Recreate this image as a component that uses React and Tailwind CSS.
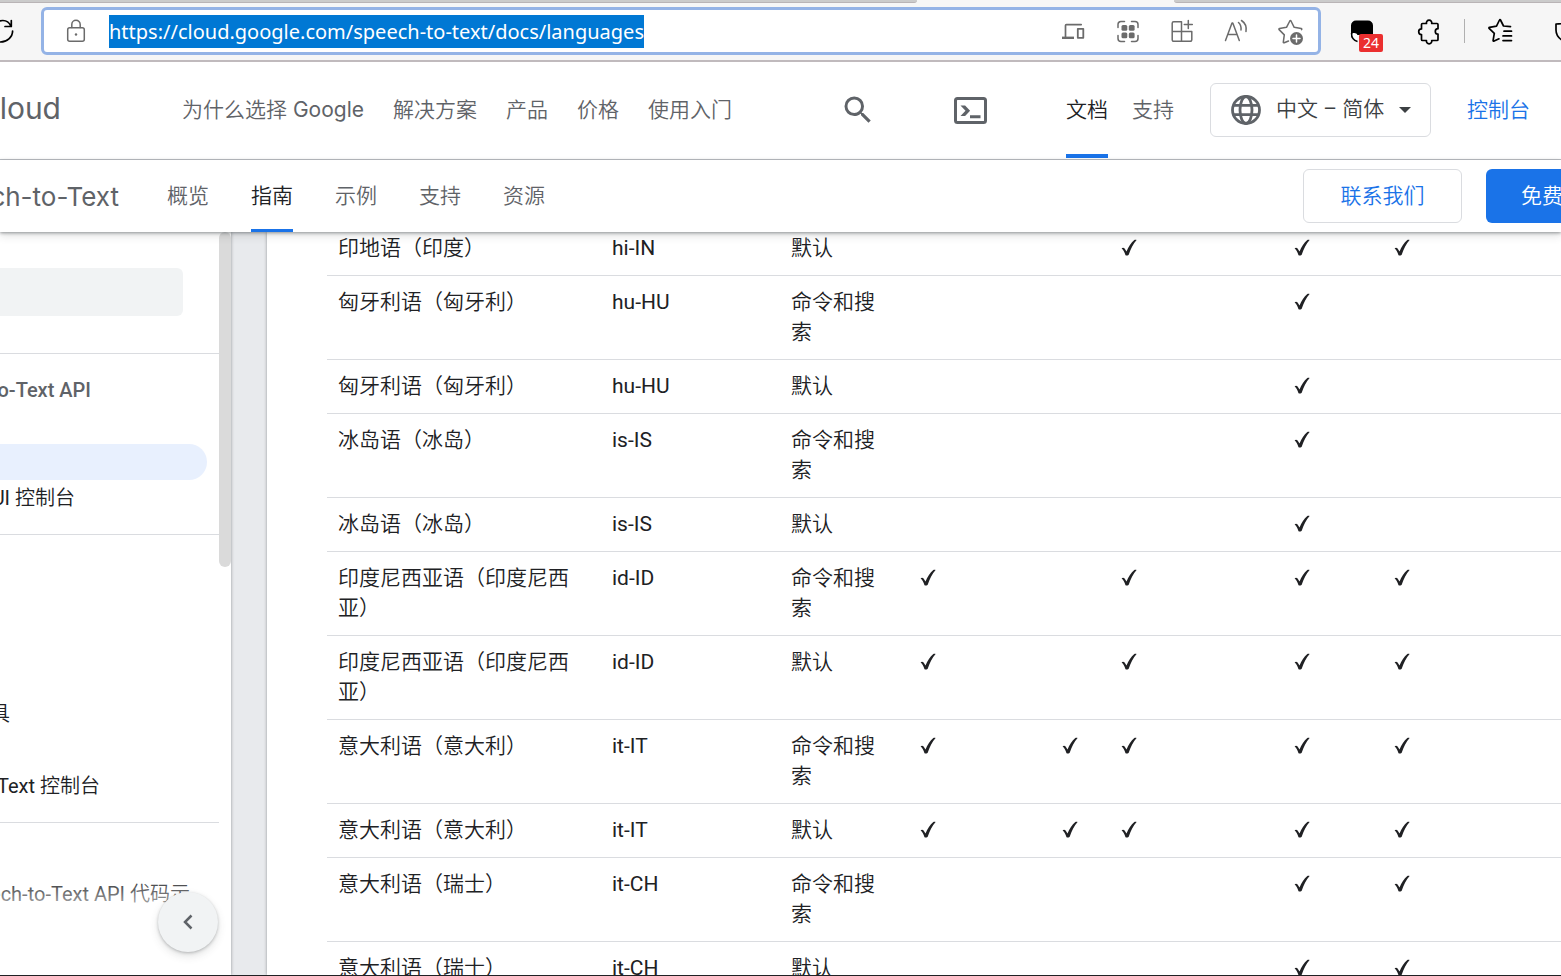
import React, { useState } from "react";

const pageUrl = "https://cloud.google.com/speech-to-text/docs/languages";

const productLinks = ["为什么选择 Google", "解决方案", "产品", "价格", "使用入门"];
const guideTabs = ["概览", "指南", "示例", "支持", "资源"];

// checks: one flag per feature column
const languages = [
  { name: "印地语（印度）", code: "hi-IN", model: "默认", checks: [0, 0, 1, 1, 1] },
  { name: "匈牙利语（匈牙利）", code: "hu-HU", model: "命令和搜索", checks: [0, 0, 0, 1, 0] },
  { name: "匈牙利语（匈牙利）", code: "hu-HU", model: "默认", checks: [0, 0, 0, 1, 0] },
  { name: "冰岛语（冰岛）", code: "is-IS", model: "命令和搜索", checks: [0, 0, 0, 1, 0] },
  { name: "冰岛语（冰岛）", code: "is-IS", model: "默认", checks: [0, 0, 0, 1, 0] },
  { name: "印度尼西亚语（印度尼西亚）", code: "id-ID", model: "命令和搜索", checks: [1, 0, 1, 1, 1] },
  { name: "印度尼西亚语（印度尼西亚）", code: "id-ID", model: "默认", checks: [1, 0, 1, 1, 1] },
  { name: "意大利语（意大利）", code: "it-IT", model: "命令和搜索", checks: [1, 1, 1, 1, 1] },
  { name: "意大利语（意大利）", code: "it-IT", model: "默认", checks: [1, 1, 1, 1, 1] },
  { name: "意大利语（瑞士）", code: "it-CH", model: "命令和搜索", checks: [0, 0, 0, 1, 1] },
  { name: "意大利语（瑞士）", code: "it-CH", model: "默认", checks: [0, 0, 0, 1, 1] },
];

function LineIcon({ children, className = "" }) {
  return (
    <svg
      viewBox="0 0 28 28"
      className={`h-7 w-7 shrink-0 ${className}`}
      fill="none"
      stroke="currentColor"
      strokeWidth="1.5"
      strokeLinecap="round"
      strokeLinejoin="round"
      aria-hidden="true"
    >
      {children}
    </svg>
  );
}

function CheckIcon() {
  return (
    <svg viewBox="0 0 22 30" className="block h-[30px] w-[22px] fill-[#202124]" role="img" aria-label="支持">
      <path d="M3.600 15.300c.9-.9 2.300-.8 3 .2l1.900 3.100C10.600 13.600 13 9.600 16.300 7c.6-.4 1.700-.4 2.300-.1-3.300 3.600-5.900 9-7.900 14.900-.2.8-2.900 1-3.300.2-.9-2.500-1.900-5-3.800-6.700z" />
    </svg>
  );
}

function BrowserBar() {
  const [url, setUrl] = useState(pageUrl);

  return (
    <div className="shrink-0 border-b-2 border-[#c0babd] bg-[#f6f6f6]">
      <div className="flex h-[3px]">
        <div className="flex-[917] rounded-br border-b border-[#b9b4b6] bg-[#cbcbcb]" />
        <div className="flex-[257]" />
        <div className="flex-[387] rounded-bl border-b border-[#b9b4b6] bg-[#cbcbcb]" />
      </div>
      <div className="flex h-[57px] items-center pb-px">
        <button type="button" aria-label="刷新" className="w-[41px] text-black">
          <svg viewBox="0 0 14 28" className="h-7 w-[14px]" fill="none" stroke="currentColor" strokeWidth="1.7" strokeLinecap="round" strokeLinejoin="round">
            <path d="M0 3.800C4.800 2.800 9 4.800 10.800 9M11.300 3.500v6H5M12.600 14c0 6-5.600 11.200-12.600 11" />
          </svg>
        </button>
        <div className="flex h-12 flex-1 items-center rounded-md border-3 border-[#94b3e6] bg-white pr-[14px] pl-[18px] text-[#6b6b6b]">
          <LineIcon>
            <rect x="5.700" y="10.700" width="16.600" height="13.600" rx="2" />
            <path d="M9.800 10.500V7.500a4.200 4.200 0 0 1 8.400 0v3" />
            <circle cx="14" cy="17.500" r="1.200" fill="currentColor" stroke="none" />
          </LineIcon>
          <input
            aria-label="地址栏"
            value={url}
            onChange={(e) => setUrl(e.target.value)}
            className="ml-[19px] h-[33px] field-sizing-content bg-[#0078d4] font-['Noto_Sans',sans-serif] text-[20px] text-white outline-none"
          />
          <div className="ml-auto flex gap-[26px]">
            <LineIcon>
              <path d="M5.500 20.500V8.500c0-.6.3-.9.9-.9h14.800" strokeWidth="1.700" />
              <path d="M2 20.800h12" strokeWidth="2.400" strokeLinecap="butt" />
              <rect x="17.800" y="11.800" width="5.500" height="9" strokeWidth="1.800" />
            </LineIcon>
            <LineIcon>
              <path d="M10.500 4.500H7A3 3 0 0 0 4 7.500v3M17.500 4.500H21a3 3 0 0 1 3 3v3M10.500 24.500H7a3 3 0 0 1-3-3v-3M17.500 24.500H21a3 3 0 0 0 3-3v-3" />
              <g fill="currentColor" stroke="none">
                <rect x="7.500" y="8" width="5.800" height="5.800" rx="1.500" />
                <rect x="14.800" y="8" width="5.800" height="5.800" rx="1.500" />
                <rect x="7.500" y="15.500" width="5.800" height="5.800" rx="1.500" />
                <rect x="14.800" y="15.500" width="5.800" height="5.800" rx="1.500" />
              </g>
            </LineIcon>
            <LineIcon>
              <path d="M13.500 4.700H5.700a1.500 1.500 0 0 0-1.500 1.500v16.600a1.500 1.500 0 0 0 1.500 1.500h16.600a1.500 1.500 0 0 0 1.500-1.500v-8.300H4.200M13.500 4.700v19.600M20.300 3.500v8M16.300 7.500h8" />
            </LineIcon>
            <LineIcon>
              <path d="M3.500 23.500 10 6h.8l6.500 17.500M6 17.500h8.800M16.500 5.500c2 1.800 2.800 4.500 2.500 7.500M19.500 3.500c3.800 2.500 5.200 6.500 4.500 11" />
            </LineIcon>
            <LineIcon>
              <path d="m12.500 24-4.300 1.800c-.6.200-1-.1-.9-.7l1-7.200-5.200-5.300c-.4-.5-.2-1 .4-1.100l7-1.200 3.300-6.300c.3-.5.9-.5 1.200 0l3.200 6.300 7 1.200c.6.100.8.600.4 1.100" />
              <circle cx="20.500" cy="21.500" r="6.500" fill="currentColor" stroke="none" />
              <path d="M20.500 18v7M17 21.500h7" stroke="white" />
            </LineIcon>
          </div>
        </div>
        <div className="relative ml-[27px]">
          <svg viewBox="0 0 28 28" className="h-7 w-7" aria-hidden="true">
            <path d="M8 3.500h12a5 5 0 0 1 5 5V18H4v3.500A5 5 0 0 1 3 18V8.500a5 5 0 0 1 5-5z" fill="black" />
            <path d="M4 17.500c0-2 5-2 5.500 1V24C6 23.500 4 21.500 4 17.500z" fill="white" />
            <path d="M3.500 16c0 4.500 1.500 7.500 6 8.500" fill="none" stroke="black" strokeWidth="1.500" />
          </svg>
          <span className="absolute top-[17px] left-[11px] grid h-[18px] w-6 place-items-center rounded-xs bg-[#eb2f2f] font-['Noto_Sans',sans-serif] text-sm leading-none text-white">
            24
          </span>
        </div>
        <button type="button" aria-label="扩展" className="ml-[39px] text-black">
          <LineIcon>
            <path d="M7.500 6.500h4a2.700 2.700 0 1 1 5.200 0h5.300a1 1 0 0 1 1 1v4.200a2.700 2.700 0 1 0 0 5.400v5.400a1 1 0 0 1-1 1h-5.300a2.700 2.700 0 1 1-5.200 0h-4a1 1 0 0 1-1-1v-5a2.700 2.700 0 1 1 0-5.600V7.500a1 1 0 0 1 1-1z" strokeWidth="1.700" />
          </LineIcon>
        </button>
        <div className="mx-[21px] h-6 w-px bg-[#b0b0b0]" />
        <button type="button" aria-label="收藏夹" className="text-black">
          <LineIcon>
            <path d="M24.500 10.700 17.500 10l-3-6c-.2-.5-.8-.5-1 0l-3 6.200-7 1.100c-.6.100-.8.700-.4 1.100l5.200 5-1.200 7c-.1.600.5 1 1 .7L13 22.800M18 15.200h7.500M17 19.900h8.500M17 24.600h8.500" transform="translate(0 -1)" strokeWidth="1.700" />
          </LineIcon>
        </button>
        <div className="ml-10 w-[7px] overflow-hidden text-black">
          <LineIcon>
            <path d="M13 4C10 6.500 6 7 2 7v6c0 6 4 9.500 9 12" strokeWidth="1.700" />
          </LineIcon>
        </div>
      </div>
    </div>
  );
}

function SiteHeader() {
  return (
    <header className="flex h-[98px] shrink-0 items-center border-b border-[#bdc1c6] bg-white pr-[31px] pb-px font-[Inter,'Noto_Sans_CJK_SC_DemiLight','Noto_Sans_CJK_SC_Light','Noto_Sans_CJK_SC',sans-serif] text-[21px] whitespace-nowrap text-[#5f6368]">
      <a href="#home" className="flex w-[61px] justify-end pb-1 text-[30px]">
        loud
      </a>
      <nav className="ml-[121px] flex gap-[29px]">
        {productLinks.map((label) => (
          <a key={label} href="#product">
            {label}
          </a>
        ))}
      </nav>
      <div className="ml-auto flex h-full items-center">
        <button type="button" aria-label="搜索">
          <svg viewBox="0 0 24 24" className="size-9 fill-current">
            <path d="M15.500 14h-.79l-.28-.27A6.470 6.470 0 0 0 16 9.500 6.500 6.500 0 1 0 9.500 16c1.610 0 3.090-.59 4.230-1.570l.27.280v.79l5 4.990L20.490 19l-4.990-5zm-6 0C7.010 14 5 11.990 5 9.500S7.010 5 9.500 5 14 7.010 14 9.500 11.990 14 9.500 14z" />
          </svg>
        </button>
        <button type="button" aria-label="Cloud Shell" className="ml-[77px]">
          <svg viewBox="0 0 36 36" className="size-9">
            <rect x="2.500" y="6.500" width="30" height="24" rx="2" fill="none" stroke="currentColor" strokeWidth="3" />
            <path d="M7.500 13.500h4.600l5 5.300-5 5.300H7.500l5-5.300zM17 23.300h10.500v3H17z" fill="currentColor" />
          </svg>
        </button>
        <nav className="ml-[77px] flex h-full gap-6">
          <a href="#docs" className="flex items-center border-y-4 border-t-transparent border-b-[#1a73e8] text-[#202124]">
            文档
          </a>
          <a href="#support" className="flex items-center">
            支持
          </a>
        </nav>
        <div className="ml-9 flex h-[54px] w-[221px] items-center rounded-md border border-[#dadce0] pl-[17px]">
          <svg viewBox="0 0 36 36" className="size-9" fill="none" stroke="currentColor" strokeWidth="2.800" aria-hidden="true">
            <circle cx="18" cy="18" r="13.500" />
            <ellipse cx="18" cy="18" rx="6" ry="13.500" />
            <path d="M5.500 13.300h25M5.500 22.700h25" />
          </svg>
          <select aria-label="语言" className="ml-3 appearance-none bg-transparent font-[Roboto,'Noto_Sans_CJK_SC_DemiLight','Noto_Sans_CJK_SC_Light','Noto_Sans_CJK_SC',sans-serif] text-[#3c4043] outline-none">
            <option>中文 – 简体</option>
          </select>
          <svg viewBox="0 0 12 6" className="ml-[14px] h-[6px] w-3 fill-[#3c4043]" aria-hidden="true">
            <path d="M0 0h12L6 6z" />
          </svg>
        </div>
        <a href="#console" className="ml-9 text-[#1a73e8]">
          控制台
        </a>
      </div>
    </header>
  );
}

function ProductHeader() {
  return (
    <div className="relative z-10 flex h-[72px] shrink-0 items-center bg-white font-[Inter,'Noto_Sans_CJK_SC_DemiLight','Noto_Sans_CJK_SC_Light','Noto_Sans_CJK_SC',sans-serif] text-[21px] whitespace-nowrap text-[#5f6368] shadow-[0_1px_3px_rgba(60,64,67,0.5),0_4px_8px_rgba(60,64,67,0.15)]">
      <h1 className="flex w-[119px] justify-end text-[26px]">ch-to-Text</h1>
      <nav className="ml-12 flex h-full gap-[42px]">
        {guideTabs.map((label) => (
          <a
            key={label}
            href="#tab"
            className={`flex items-center border-y-3 border-t-transparent ${
              label === "指南" ? "border-b-[#1a73e8] text-[#202124]" : "border-b-transparent"
            }`}
          >
            {label}
          </a>
        ))}
      </nav>
      <button type="button" className="ml-auto h-[54px] w-[159px] rounded-md border border-[#dadce0] text-[#1a73e8]">
        联系我们
      </button>
      <button type="button" className="ml-6 h-[54px] w-[75px] overflow-hidden rounded-l-md bg-[#1a73e8] pl-[35px] text-left text-white">
        免费
      </button>
    </div>
  );
}

function SideItem({ children, className = "" }) {
  return <li className={`flex h-9 items-center justify-end ${className}`}>{children}</li>;
}

function Sidebar() {
  return (
    <aside className="relative w-[231px] shrink-0 bg-white text-[20px] whitespace-nowrap text-[#202124] shadow-[0_0_3px_rgba(60,64,67,0.5)]">
      <div className="w-[219px]">
        <div className="pt-9 pb-[37px]">
          <input aria-label="过滤" className="block h-12 w-[183px] rounded-r-md bg-[#f1f3f4] outline-none" />
        </div>
        <ul className="border-t border-[#dadce0] py-[18px]">
          <SideItem className="w-[91px] font-medium text-[#5f6368]">o-Text API</SideItem>
          <SideItem />
          <SideItem className="w-[207px] rounded-r-full bg-[#e8f0fe]" />
          <SideItem className="w-[75px]">UI 控制台</SideItem>
        </ul>
        <ul className="border-t border-[#dadce0] pt-[17px] pb-[18px]">
          <SideItem />
          <SideItem />
          <SideItem />
          <SideItem />
          <SideItem className="w-[10px]">具</SideItem>
          <SideItem />
          <SideItem className="w-[100px]">Text 控制台</SideItem>
        </ul>
        <ul className="border-t border-[#dadce0] pt-[17px]">
          <SideItem />
          <SideItem className="w-[190px]">ech-to-Text API 代码示</SideItem>
        </ul>
      </div>
      <div className="absolute inset-x-0 bottom-0 h-[100px] bg-linear-to-b from-transparent to-white to-50%" />
      <div className="absolute top-0 right-0 h-[335px] w-3 rounded-full bg-[#dadada]" />
      <button
        type="button"
        aria-label="隐藏侧边栏"
        className="absolute right-[13px] bottom-[23px] grid size-15 place-items-center rounded-full bg-[#f1f3f4] shadow-[0_1px_3px_rgba(60,64,67,0.3),0_4px_8px_rgba(60,64,67,0.15)]"
      >
        <svg viewBox="0 0 10 16" className="h-4 w-[10px]" fill="none" stroke="#5f6368" strokeWidth="2.500">
          <path d="M8.500 1.500 2 8l6.500 6.500" />
        </svg>
      </button>
    </aside>
  );
}

function LanguageTable() {
  return (
    <table className="-mt-[10px] w-full table-fixed text-[21px] leading-[30px] text-[#202124]">
      <colgroup>
        <col className="w-[274px]" />
        <col className="w-[179px]" />
        <col className="w-[126px]" />
        <col className="w-[142px]" />
        <col className="w-[59px]" />
        <col className="w-[173px]" />
        <col className="w-[100px]" />
        <col />
      </colgroup>
      <tbody>
        {languages.map((row, i) => (
          <tr key={i} className="border-b border-[#dadce0] align-top">
            <td className="px-[11px] pt-[11px] pb-3">{row.name}</td>
            <td className="px-[11px] pt-[11px] pb-3">{row.code}</td>
            <td className="px-[11px] pt-[11px] pb-3">{row.model}</td>
            {row.checks.map((on, j) => (
              <td key={j} className="px-[11px] pt-[11px] pb-3">
                {on ? <CheckIcon /> : null}
              </td>
            ))}
          </tr>
        ))}
      </tbody>
    </table>
  );
}

function App() {
  return (
    <div lang="zh-CN" className="flex h-screen flex-col overflow-hidden border-b border-[#202124] bg-white font-[Roboto,'Noto_Sans_CJK_SC_DemiLight','Noto_Sans_CJK_SC_Light','Noto_Sans_CJK_SC',sans-serif]">
      <BrowserBar />
      <SiteHeader />
      <ProductHeader />
      <div className="flex min-h-0 flex-1 bg-[#e8eaed]">
        <Sidebar />
        <main className="ml-9 min-w-0 flex-1 overflow-hidden bg-white pl-[60px] shadow-[0_0_3px_rgba(60,64,67,0.5)]">
          <LanguageTable />
        </main>
      </div>
    </div>
  );
}

export default App;
